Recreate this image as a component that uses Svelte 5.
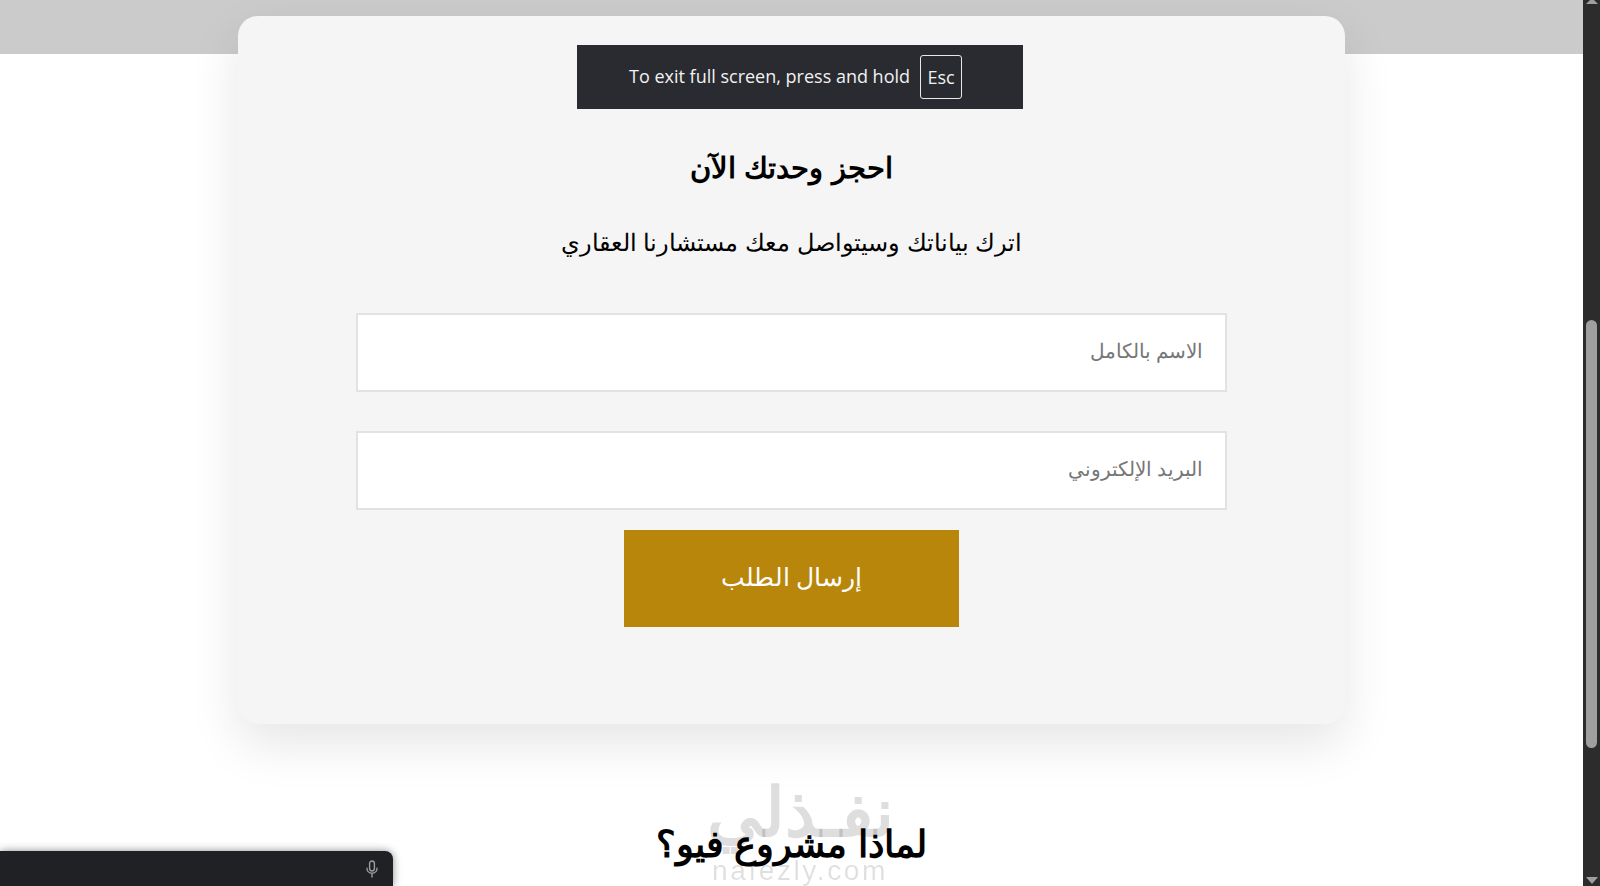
<script lang="ts">
  const fields = ['الاسم بالكامل', 'البريد الإلكتروني'];
</script>

<div class="viewport">
  <main class="page" dir="rtl">
    <div class="band"></div>
    <section class="card">
      <h2>احجز وحدتك الآن</h2>
      <p class="lead">اترك بياناتك وسيتواصل معك مستشارنا العقاري</p>
      <form class="form" onsubmit={(e) => e.preventDefault()}>
        {#each fields as placeholder}
          <input type="text" {placeholder} />
        {/each}
        <button type="submit">إرسال الطلب</button>
      </form>
    </section>
    <h2 class="why">لماذا مشروع فيو؟</h2>
  </main>

  <div class="scrollbar" aria-hidden="true">
    <span class="arrow up"></span>
    <div class="track"><div class="thumb"></div></div>
    <span class="arrow down"></span>
  </div>

  <div class="toast">
    <span>To exit full screen, press and hold</span>
    <kbd>Esc</kbd>
  </div>

  <div class="watermark" aria-hidden="true">
    <div class="wm-ar">نفـذلي</div>
    <div class="wm-en">nafezly.com</div>
  </div>

  <div class="dock">
    <svg width="14" height="18" viewBox="0 0 14 18" fill="none" stroke="#9a9c9e" stroke-width="1.4" stroke-linecap="round">
      <rect x="4.6" y="1" width="4.8" height="10" rx="2.4" />
      <path d="M2 8.2c0 3 2.2 5 5 5s5-2 5-5M7 13.2V17" />
    </svg>
  </div>
</div>

<style>
  :global(body) {
    margin: 0;
    background: #fff;
  }

  .viewport {
    position: relative;
    display: flex;
    height: 886px;
    overflow: hidden;
    font-family: "Liberation Sans", Arial, sans-serif;
    color: #000;
  }

  .page {
    flex: 1;
    min-width: 0;
  }

  .band {
    height: 54px;
    background: #cbcbcb;
  }

  .card {
    box-sizing: border-box;
    width: 1107px;
    height: 708px;
    margin: -38px 238px 0;
    padding-top: 133px;
    background: #f5f5f5;
    border-radius: 20px;
    box-shadow: 0 20px 50px rgba(0, 0, 0, 0.1);
  }

  h2 {
    margin: 0;
    font-size: 29px;
    font-weight: 700;
    line-height: 38px;
    text-align: center;
  }

  .lead {
    margin: 38px 0 0;
    font-size: 24.4px;
    line-height: 36px;
    text-align: center;
  }

  .form {
    display: flex;
    flex-direction: column;
    align-items: center;
    margin-top: 52px;
  }

  input {
    box-sizing: border-box;
    width: 871px;
    height: 79px;
    margin-bottom: 39px;
    padding: 0 22px 3px;
    background: #fff;
    border: 2px solid #e2e2e2;
    font: inherit;
    font-size: 19.5px;
  }

  input:nth-of-type(2) {
    margin-bottom: 20px;
  }

  input::placeholder {
    color: #777;
  }

  button {
    width: 335px;
    height: 97px;
    padding-bottom: 4px;
    background: #b8860b;
    border: none;
    color: #fff;
    font: inherit;
    font-size: 25px;
  }

  .why {
    margin-top: 99px;
    font-size: 37px;
    line-height: 44px;
  }

  .scrollbar {
    display: flex;
    flex-direction: column;
    align-items: center;
    width: 17px;
    background: #2c2c2c;
  }

  .track {
    flex: 1;
    width: 100%;
    padding-top: 311px;
  }

  .thumb {
    width: 11px;
    height: 428px;
    margin: 0 auto;
    background: #9f9f9f;
    border-radius: 6px;
  }

  .arrow {
    width: 0;
    height: 0;
    margin: 5px 0;
    border-left: 6px solid transparent;
    border-right: 6px solid transparent;
  }

  .arrow.up {
    margin-top: -2px;
    border-bottom: 6px solid #9f9f9f;
  }

  .arrow.down {
    border-top: 7px solid #9f9f9f;
    margin-bottom: 2px;
  }

  .toast {
    position: absolute;
    top: 45px;
    left: 577px;
    box-sizing: border-box;
    display: flex;
    align-items: center;
    width: 446px;
    height: 64px;
    padding-left: 52px;
    gap: 10px;
    background: #292b30;
    color: #f1f1f1;
    font-family: "Open Sans", sans-serif;
    font-size: 18px;
  }

  .toast span {
    margin-top: -2px;
  }

  kbd {
    box-sizing: border-box;
    display: flex;
    align-items: center;
    justify-content: center;
    width: 42px;
    height: 44px;
    border: 1px solid #e8e8e8;
    border-radius: 3px;
    font: inherit;
  }

  .watermark {
    position: absolute;
    top: 768px;
    left: 700px;
    width: 200px;
    text-align: center;
    color: rgba(0, 0, 0, 0.13);
    font-weight: 700;
    pointer-events: none;
  }

  .wm-ar {
    font-size: 68px;
    line-height: 88px;
    white-space: nowrap;
  }

  .wm-en {
    font-size: 28px;
    line-height: 30px;
    font-weight: 400;
    letter-spacing: 2.6px;
    white-space: nowrap;
  }

  .dock {
    position: absolute;
    left: 0;
    bottom: 0;
    box-sizing: border-box;
    display: flex;
    align-items: center;
    justify-content: flex-end;
    width: 393px;
    height: 35px;
    padding-right: 14px;
    background: #1f2124;
    border-top-right-radius: 8px;
    box-shadow: 0 0 8px rgba(0, 0, 0, 0.45);
  }
</style>
